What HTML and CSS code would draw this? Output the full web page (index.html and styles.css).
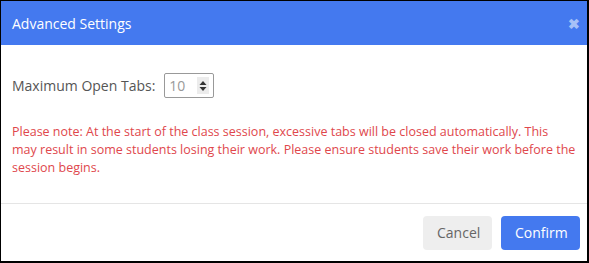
FILE: index.html
```html
<!DOCTYPE html>
<html>
<head>
<meta charset="utf-8">
<title>Advanced Settings</title>
<link rel="stylesheet" href="styles.css">
</head>
<body>

<div class="modal">
  <div class="modal-header">
    <span class="modal-title">Advanced Settings</span>
    <span class="modal-close">&#x2716;</span>
  </div>

  <div class="modal-body">
    <div class="field">
      <label class="field-label">Maximum Open Tabs:</label>
      <div class="spin-input">
        <span class="spin-value">10</span>
        <span class="spin-arrows">
          <svg width="8" height="12" viewBox="0 0 8 12">
            <path d="M4 1 L7.5 5 L0.5 5 Z" fill="#333"/>
            <path d="M4 11 L7.5 7 L0.5 7 Z" fill="#333"/>
          </svg>
        </span>
      </div>
    </div>

    <p class="warning">Please note: At the start of the class session, excessive tabs will be closed automatically. This may result in some students losing their work. Please ensure students save their work before the session begins.</p>
  </div>

  <div class="modal-footer">
    <button class="btn btn-cancel">Cancel</button>
    <button class="btn btn-confirm">Confirm</button>
  </div>
</div>

</body>
</html>
```

FILE: styles.css
```css
html, body {
    margin: 0;
    padding: 0;
}

body {
    background: #fff;
    font-family: "Open Sans", "Liberation Sans", sans-serif;
}

.modal {
    width: 589px;
    height: 263px;
    box-sizing: border-box;
    border: 1px solid #000;
    border-right-width: 2px;
    border-bottom-width: 2px;
    background: #fff;
    display: flex;
    flex-direction: column;
}

.modal-header {
    height: 44px;
    background: #4479ef;
    display: flex;
    align-items: center;
    justify-content: space-between;
    padding: 0 7px 0 11px;
}

.modal-title {
    color: #fff;
    font-size: 14px;
}

.modal-close {
    color: #a7c1f7;
    font-size: 14px;
    font-weight: bold;
}

.modal-body {
    padding: 28px 11px 0 11px;
    height: 130px;
    border-bottom: 1px solid #e5e5e5;
}

.field {
    display: flex;
    align-items: center;
}

.field-label {
    color: #555;
    font-size: 14px;
    margin-right: 9px;
}

.spin-input {
    width: 50px;
    height: 25px;
    box-sizing: border-box;
    border: 1px solid #999;
    border-radius: 2px;
    display: flex;
    align-items: center;
    justify-content: space-between;
    padding: 0 4px 0 4px;
}

.spin-value {
    color: #999;
    font-size: 14px;
}

.spin-arrows {
    width: 12px;
    height: 17px;
    background: #ececec;
    display: flex;
    align-items: center;
    justify-content: center;
}

.spin-arrows svg {
    display: block;
}

.warning {
    margin: 25px 0 0 0;
    color: #e0474c;
    font-size: 12.5px;
    line-height: 18px;
}

.modal-footer {
    flex: 1;
    display: flex;
    justify-content: flex-end;
    align-items: center;
    gap: 9px;
    padding: 0 7px 0 0;
}

.btn {
    height: 34px;
    border: 0;
    border-radius: 4px;
    font-family: "Open Sans", "Liberation Sans", sans-serif;
    font-size: 14px;
    padding: 0 14px;
}

.btn-cancel {
    background: #eeeeee;
    color: #666;
    width: 69px;
}

.btn-confirm {
    background: #4479ef;
    color: #fff;
    width: 79px;
}
```
